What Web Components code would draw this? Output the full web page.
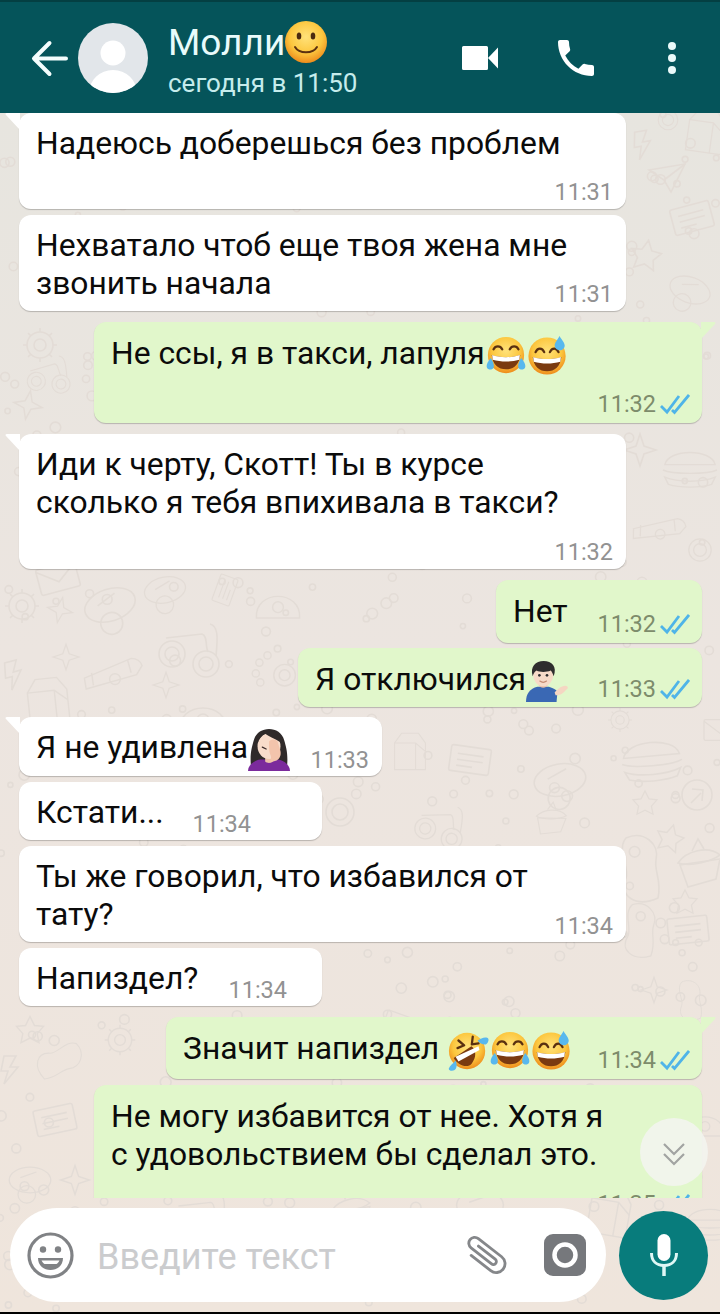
<!DOCTYPE html>
<html lang="ru">
<head>
<meta charset="utf-8">
<title>Молли</title>
<style>
  html, body { margin: 0; padding: 0; background: #000; }
  body { font-family: Roboto, "Liberation Sans", sans-serif; }
</style>
</head>
<body>
<wa-chat>
  <wa-header slot="header" name="Молли" status="сегодня в 11:50"></wa-header>

  <wa-bubble style="width:607px;height:96px;margin-bottom:6px" time="11:31">Надеюсь доберешься без проблем</wa-bubble>
  <wa-bubble style="width:607px;height:96px;margin-bottom:11px" time="11:31">Нехватало чтоб еще твоя жена мне<br>звонить начала</wa-bubble>
  <wa-bubble out tail style="width:608px;height:101px;margin-bottom:11px" time="11:32">Не ссы, я в такси, лапуля<wa-emoji kind="joy"></wa-emoji><wa-emoji kind="sweat"></wa-emoji></wa-bubble>
  <wa-bubble tail style="width:607px;height:135px;margin-bottom:11px" time="11:32">Иди к черту, Скотт! Ты в курсе<br>сколько я тебя впихивала в такси?</wa-bubble>
  <wa-bubble out style="width:206px;height:63px;margin-bottom:5px" time="11:32">Нет</wa-bubble>
  <wa-bubble out style="width:404px;height:59px;margin-bottom:10px;--meta-bottom:3px" time="11:33">Я отключился<wa-emoji kind="shrug"></wa-emoji></wa-bubble>
  <wa-bubble tail style="width:363px;height:59px;margin-bottom:6px;--meta-bottom:1px" time="11:33">Я не удивлена<wa-emoji kind="facepalm"></wa-emoji></wa-bubble>
  <wa-bubble style="width:303px;height:58px;margin-bottom:6px;--meta-right:71px;--meta-bottom:1px" time="11:34">Кстати...</wa-bubble>
  <wa-bubble style="width:607px;height:96px;margin-bottom:6px;--meta-bottom:1px" time="11:34">Ты же говорил, что избавился от<br>тату?</wa-bubble>
  <wa-bubble style="width:303px;height:58px;margin-bottom:11px;--meta-right:35px;--meta-bottom:1px" time="11:34">Напиздел?</wa-bubble>
  <wa-bubble out tail style="width:536px;height:62px;margin-bottom:6px" time="11:34">Значит напиздел&nbsp;<wa-emoji kind="rofl"></wa-emoji><wa-emoji kind="joy"></wa-emoji><wa-emoji kind="sweat"></wa-emoji></wa-bubble>
  <wa-bubble out style="width:608px;height:138px" time="11:35">Не могу избавится от нее. Хотя я<br>с удовольствием бы сделал это.</wa-bubble>

  <wa-scroll-down slot="over"></wa-scroll-down>
  <wa-composer slot="composer" placeholder="Введите текст"></wa-composer>
</wa-chat>

<script>
// Chat shell: header on top, wallpaper + message list, composer at the bottom
const chatTemplate = document.createElement('template');
chatTemplate.innerHTML = `
  <style>
    :host {
      display: flex;
      flex-direction: column;
      width: 720px;
      height: 1314px;
      overflow: hidden;
      background: #000;
      font-family: Roboto, "Liberation Sans", sans-serif;
    }
    .main {
      position: relative;
      flex: none;
      height: 1199px;
      display: flex;
      flex-direction: column;
      overflow: hidden;
    }
    .list {
      position: relative;
      flex: none;
      height: 1085px;
      display: flex;
      flex-direction: column;
      overflow: hidden;
    }
  </style>
  <slot name="header"></slot>
  <div class="main">
    <wa-wallpaper></wa-wallpaper>
    <div class="list"><slot></slot></div>
    <slot name="composer"></slot>
    <slot name="over"></slot>
  </div>
`;

class WaChat extends HTMLElement {
  constructor() {
    super();
    this.attachShadow({ mode: 'open' }).appendChild(chatTemplate.content.cloneNode(true));
  }
}

// Top bar
const headerTemplate = document.createElement('template');
headerTemplate.innerHTML = `
  <style>
    :host {
      display: flex;
      flex: none;
      align-items: center;
      height: 113px;
      box-sizing: border-box;
      border-top: 2px solid #043f42;
      background: #05545a;
      color: #fff;
      padding: 0 36px 0 30px;
    }
    .back { width: 40px; height: 40px; flex: none; margin-top: 2px; }
    .avatar { width: 70px; height: 70px; flex: none; margin: 1px 0 0 8px; }
    .info { flex: 1; margin: 3px 0 0 20px; }
    .name {
      display: flex;
      align-items: center;
      height: 44px;
      font-size: 37px;
      line-height: 44px;
      color: #e9fbfb;
    }
    .status { font-size: 26px; line-height: 30px; margin-top: 3px; color: #c6ecec; }
    .actions { display: flex; align-items: center; }
    .video { width: 36px; height: 24px; margin-right: 60px; }
    .call { width: 36px; height: 36px; margin-right: 66px; }
    .dots { width: 24px; height: 40px; }
    wa-emoji { --size: 44px; --drop: -1px; margin-left: -1px; }
  </style>
  <svg class="back" viewBox="0 0 40 40">
    <path d="M36 19.500H5M19.500 4 4 19.500 19.500 35" fill="none" stroke="#f4fdfd" stroke-width="4" stroke-linecap="round" stroke-linejoin="round"/>
  </svg>
  <svg class="avatar" viewBox="0 0 70 70">
    <clipPath id="round"><circle cx="35" cy="35" r="35"/></clipPath>
    <g clip-path="url(#round)">
      <rect width="70" height="70" fill="#e2e6ea"/>
      <circle cx="35" cy="30" r="12.500" fill="#fff"/>
      <ellipse cx="35" cy="70" rx="24" ry="23" fill="#fff"/>
    </g>
  </svg>
  <div class="info">
    <div class="name"><span id="name"></span><wa-emoji kind="smile"></wa-emoji></div>
    <div class="status" id="status"></div>
  </div>
  <div class="actions">
    <svg class="video" viewBox="0 0 36 24">
      <path d="M1.500 0h23A1.500 1.500 0 0 1 26 1.500v21a1.500 1.500 0 0 1-1.500 1.500h-23A1.500 1.500 0 0 1 0 22.500v-21A1.500 1.500 0 0 1 1.500 0z" fill="#fff"/>
      <path d="M26 12 36 1.500v21z" fill="#fff"/>
    </svg>
    <svg class="call" viewBox="3 3 18 18">
      <path fill="#fff" d="M6.62 10.79c1.44 2.83 3.76 5.14 6.59 6.59l2.2-2.2c.27-.27.67-.36 1.02-.24 1.12.37 2.33.57 3.57.57.55 0 1 .45 1 1V20c0 .55-.45 1-1 1-9.39 0-17-7.61-17-17 0-.55.45-1 1-1h3.5c.55 0 1 .45 1 1 0 1.25.2 2.45.57 3.57.11.35.03.74-.25 1.02l-2.2 2.2z"/>
    </svg>
    <svg class="dots" viewBox="0 0 24 40">
      <circle cx="12" cy="8" r="4" fill="#eafafa"/>
      <circle cx="12" cy="20" r="4" fill="#eafafa"/>
      <circle cx="12" cy="32" r="4" fill="#eafafa"/>
    </svg>
  </div>
`;

class WaHeader extends HTMLElement {
  constructor() {
    super();
    this._shadowRoot = this.attachShadow({ mode: 'open' });
    this._shadowRoot.appendChild(headerTemplate.content.cloneNode(true));
  }

  connectedCallback() {
    this._shadowRoot.getElementById('name').textContent = this.getAttribute('name');
    this._shadowRoot.getElementById('status').textContent = this.getAttribute('status');
  }
}

// One message. Size comes from the page (style on the element), text from the slot
const bubbleTemplate = document.createElement('template');
bubbleTemplate.innerHTML = `
  <style>
    :host {
      position: relative;
      display: flex;
      flex: none;
      box-sizing: border-box;
      margin-left: 19px;
      padding: 11px var(--meta-right, 13px) 0 17px;
      border-radius: 12px;
      background: #fff;
      box-shadow: 0 1px 1px rgba(0, 0, 0, .22);
      font-size: 31.800px;
      line-height: 38px;
      color: #0b0b0b;
    }
    :host([out]) {
      align-self: flex-end;
      margin: 0 18px 0 0;
      padding: 12px 12px 0 17px;
      background: #e1f7cb;
    }
    .text { flex: 1 1 0; min-width: 0; white-space: nowrap; }
    .meta {
      align-self: flex-end;
      display: flex;
      align-items: center;
      flex: none;
      height: 30px;
      margin-bottom: var(--meta-bottom, 2px);
      font-size: 23.500px;
      line-height: 30px;
      color: #929292;
    }
    :host([out]) .meta { color: #7d8c6b; margin-bottom: var(--meta-bottom, 4px); }
    .ticks { display: none; width: 30px; height: 24px; margin-left: 4px; }
    :host([out]) .ticks { display: block; }
    .tail { display: none; position: absolute; top: 0; width: 15px; height: 17px; left: -14px; }
    :host([tail]) .tail { display: block; }
    :host([out]) .tail { left: auto; right: -14px; transform: scaleX(-1); }
    .tail path { fill: #fff; }
    :host([out]) .tail path { fill: #e1f7cb; }
  </style>
  <svg class="tail" viewBox="0 0 15 17"><path d="M15 0H2C.4 0 0 1 1 2l14 15z"/></svg>
  <div class="text"><slot></slot></div>
  <div class="meta">
    <span id="time"></span>
    <svg class="ticks" viewBox="0 0 30 24">
      <path d="M1 14l6 6L19 4M12 18l2.500 2.500L29 3" fill="none" stroke="#4fb4e8" stroke-width="2.800"/>
    </svg>
  </div>
`;

class WaBubble extends HTMLElement {
  constructor() {
    super();
    this._shadowRoot = this.attachShadow({ mode: 'open' });
    this._shadowRoot.appendChild(bubbleTemplate.content.cloneNode(true));
  }

  connectedCallback() {
    this._shadowRoot.getElementById('time').textContent = this.getAttribute('time');
    if (!this.previousElementSibling || this.previousElementSibling.tagName === 'WA-HEADER') {
      this.setAttribute('tail', '');
    }
  }
}

// Emoji are drawn, there is no colour emoji font on the machine
const FACE = `
  <defs>
    <radialGradient id="f" cx=".5" cy=".38" r=".62">
      <stop offset="0" stop-color="#ffe27a"/>
      <stop offset=".62" stop-color="#fcc73f"/>
      <stop offset="1" stop-color="#ee8c1c"/>
    </radialGradient>
  </defs>
`;
const TEAR = '#58b8ee';
const EMOJI = {
  smile: `${FACE}
    <circle cx="22" cy="22" r="21" fill="url(#f)"/>
    <ellipse cx="15" cy="16" rx="2.300" ry="3.600" fill="#4a2a10"/>
    <ellipse cx="29" cy="16" rx="2.300" ry="3.600" fill="#4a2a10"/>
    <path d="M11 27c4 7 18 7 22 0" fill="none" stroke="#5a3010" stroke-width="2" stroke-linecap="round"/>`,
  joy: `${FACE}
    <circle cx="22" cy="21" r="19" fill="url(#f)"/>
    <path d="M9 15c2-4 7-4 9 0M26 15c2-4 7-4 9 0" fill="none" stroke="#5a3010" stroke-width="2.400" stroke-linecap="round"/>
    <path d="M7 21c8 3 22 3 30 0-1 10-7 15-15 15S8 31 7 21z" fill="#7a3a10"/>
    <path d="M7.500 21c8 3 21 3 29 0l-.5 5c-9 2.500-19 2.500-28 0z" fill="#fff"/>
    <path d="M6 24c-3 4-5 7-4 10s6 3 7 0-1-7-3-10zM38 24c3 4 5 7 4 10s-6 3-7 0 1-7 3-10z" fill="${TEAR}"/>`,
  sweat: `${FACE}
    <circle cx="21" cy="22" r="19.500" fill="url(#f)"/>
    <path d="M9 18c2-5 7-5 9 0M24 18c2-5 7-5 9 0" fill="none" stroke="#5a3010" stroke-width="2.400" stroke-linecap="round"/>
    <path d="M6 23c8 3 22 3 30 0-1 10-7 15-15 15S7 33 6 23z" fill="#7a3a10"/>
    <path d="M6.500 23c8 3 21 3 29 0l-.5 5c-9 2.500-19 2.500-28 0z" fill="#fff"/>
    <path d="M34 1c-2 4-5 7-5 10s3 5 5.500 5 5-2 5-5-3-6-5.500-10z" fill="${TEAR}"/>`,
  rofl: `${FACE}
    <circle cx="21" cy="22" r="19" fill="url(#f)"/>
    <path d="M12 11l6 5-7 3M27 7l-1 8 7-1" fill="none" stroke="#5a3010" stroke-width="2.400" stroke-linecap="round" stroke-linejoin="round"/>
    <path d="M8 23 30 21c3 6-1 13-8 16S8 31 8 23z" transform="rotate(-28 20 28)" fill="#7a3a10"/>
    <path d="M9 28 33 17l1 4-22 12z" fill="#fff"/>
    <path d="M32 11c3-2 7-4 10-3s1 6-1 7-7-1-9-4zM9 32c-2 3-6 5-7 8s4 3 6 2 3-6 1-10z" fill="${TEAR}"/>`,
  shrug: `
    <path d="M0 43c0-9 4-14 12-16h12c4 1 7 3 9 5l-1 11z" fill="#3a68b4"/>
    <path d="M30 33c3-3 7-7 11-7 3 0 4 3 1 4-2 3-6 6-11 6z" fill="#f5d6c2"/>
    <path d="M13 25c2 4 8 4 10 0l-1-5h-8z" fill="#e9bda4"/>
    <ellipse cx="18" cy="14.500" rx="10.500" ry="12" fill="#f7dac8"/>
    <path d="M7 16C4 6 10 0 18.500 0S33 6 29 16c-1-3-2-5-3-6-5 2-11 2-15 0-2 1-3 3-4 6z" fill="#2f2d2e"/>
    <circle cx="14" cy="15" r="1.400" fill="#2f2d2e"/>
    <circle cx="22" cy="15" r="1.400" fill="#2f2d2e"/>
    <path d="M14.500 21c2 1.500 5 1.500 7 0" fill="none" stroke="#c58a72" stroke-width="1.200" stroke-linecap="round"/>`,
  facepalm: `
    <path d="M3 38C2 26 4 19 6 12 8 4 15 0 22 0s14 4 16 12c2 7 4 14 3 26z" fill="#2f2a2a"/>
    <path d="M0 44c0-6 6-11 13-12h18c7 1 13 6 13 12z" fill="#7b2a9c"/>
    <path d="M18 27h8v7c-2 2-6 2-8 0z" fill="#edc2aa"/>
    <ellipse cx="22" cy="18" rx="12" ry="13.500" fill="#f8dccb"/>
    <path d="M10 15c2-5 4-8 8-10 4 3 10 5 16 9C33 7 28 2 22 2S11 8 10 15z" fill="#2f2a2a"/>
    <path d="M15 19l4 2" stroke="#3a2a2a" stroke-width="1.300" stroke-linecap="round"/>
    <path d="M22 13c3-3 7-2 9 0l3 10c1 5-1 8-4 10l-7 2c1-3 2-6 0-9-1-3-1-9-1-13z" fill="#f3c4ac"/>`
};

const emojiTemplate = document.createElement('template');
emojiTemplate.innerHTML = `
  <style>
    :host {
      display: inline-block;
      width: var(--size, 42px);
      height: var(--size, 42px);
      margin: -10px 0;
      vertical-align: middle;
      position: relative;
      top: var(--drop, 0);
    }
    svg { display: block; width: 100%; height: 100%; }
  </style>
  <svg viewBox="0 0 44 44"></svg>
`;

class WaEmoji extends HTMLElement {
  constructor() {
    super();
    this._shadowRoot = this.attachShadow({ mode: 'open' });
    this._shadowRoot.appendChild(emojiTemplate.content.cloneNode(true));
  }

  connectedCallback() {
    this._shadowRoot.querySelector('svg').innerHTML = EMOJI[this.getAttribute('kind')] || '';
  }
}

// Doodle wallpaper, only the parts not covered by bubbles are placed by hand
const DOODLES = {
  gear: '<circle r="6"/><circle r="13"/><path d="M0-13v-4M0 13v4M-13 0h-4M13 0h4M-9-9l-3-3M9 9l3 3M-9 9l-3 3M9-9l3-3"/>',
  star: '<path d="M0-16 4-4 16 0 4 4 0 16-4 4-16 0-4-4z"/>',
  star5: '<path d="M0-15 5-5 15-4 8 4 10 14 0 9-10 14-8 4-15-4-5-5z"/>',
  env: '<rect x="-20" y="-13" width="40" height="26" rx="2"/><path d="M-20-11 0 4 20-11"/>',
  lines: '<rect x="-20" y="-13" width="40" height="26" rx="2"/><path d="M-13-5h26M-13 1h26M-13 7h16"/>',
  burger: '<path d="M-28-6C-24-24 24-24 28-6z"/><path d="M-30 0c10 5 50 5 60 0"/><path d="M-28 8c14 6 42 6 56 0l-4 8c-12 4-36 4-48 0z"/>',
  arrow: '<circle r="15"/><path d="M-6 8 4-2M-5-6 6-5 5 6"/>',
  cake: '<path d="M-18 0-10 22 18 14 22-6z"/><path d="M-20-2C-12-14 10-20 22-10c-8 6-28 12-42 8z"/><path d="M-6-14 0-26 6-16"/>',
  bolt: '<path d="M-6-14 6-14 0-3 8-3-6 14-2 1-9 1z"/>',
  plane: '<path d="M-18-8 18-14 4 14-3 2z"/><path d="M-3 2 18-14"/>',
  wheel: '<circle r="14"/><circle r="8"/>',
  bike: '<circle cx="-18" cy="6" r="13"/><circle cx="-18" cy="6" r="7"/><circle cx="16" cy="16" r="13"/><circle cx="16" cy="16" r="7"/><path d="M-24-10 12-14c6 2 3 12 6 18M20-24c8 2 8 12 6 32"/>',
  tube: '<path d="M-34-2-32 10 24-6 30-16c-2-6-6-8-12-8z"/><path d="M-26-8-24 6M14-22 18-8"/><circle cy="-1" r="6"/>',
  milk: '<path d="M-22-10V28H22V-10L12-24H-12z"/><path d="M-22-10H8L22 2M8-10V28"/>',
  dome: '<path d="M-24 20C-26-12 26-12 24 20z"/><circle cy="8" r="6"/>',
  helmet: '<ellipse rx="26" ry="16"/><path d="M-12-3 8-10"/><circle cx="-4" cy="18" r="11"/>',
  paw: '<circle cx="14" cy="8" r="12"/><circle cx="14" cy="8" r="6"/><circle cx="-14" cy="-6" r="4"/><circle cx="-5" cy="-14" r="4"/><circle cx="-18" cy="6" r="4"/><circle cx="-13" cy="16" r="4"/>',
  blob: '<path d="M-14-30C4-38 20-24 16-8 14 4 22 12 18 30-4 40-22 28-14 10-10 0-24-18-14-30z"/>'
};

const PLACED = [
  // top right column
  ['bolt', 643, 145, 1, -10], ['plane', 667, 178, 1, 0], ['lines', 692, 218, 1, -15], ['wheel', 668, 120, .7, 0],
  ['star5', 646, 255, 1, 10], ['helmet', 690, 290, .8, 20], ['milk', 706, 130, .8, 8],
  // left column, middle
  ['gear', 40, 345, 1, 0], ['star', 28, 405, .9, 10], ['bike', 48, 375, .7, -10],
  ['burger', 690, 470, .9, 0], ['tube', 660, 535, .8, 10], ['star', 640, 450, 1, 0], ['wheel', 700, 550, .8, 0],
  // gap under the long bubble
  ['env', 58, 578, 1, -15], ['helmet', 110, 605, 1, -18], ['helmet', 165, 590, .8, -12], ['lines', 225, 590, .7, -70],
  ['dome', 278, 600, .9, 0], ['gear', 22, 606, 1, 0], ['star', 60, 610, .8, 12], ['star', 66, 657, .8, 0],
  ['bike', 190, 648, 1, 0], ['bolt', 14, 675, 1, -15], ['paw', 272, 668, .9, 0],
  ['tube', 115, 680, .9, 0], ['star', 166, 685, .8, 0], ['milk', 48, 700, .9, -6], ['dome', 203, 712, 1, 0],
  // right of the short bubbles
  ['wheel', 340, 812, 1, 0], ['burger', 652, 762, 1, -5], ['arrow', 697, 795, 1, 0], ['star5', 645, 803, .8, 0],
  ['star5', 670, 838, .9, 15], ['cake', 698, 865, 1, 0], ['blob', 640, 868, 1, 0], ['star5', 685, 902, .8, 0],
  ['lines', 688, 930, 1, -6], ['blob', 640, 930, .8, 8], ['star', 654, 990, .8, 0], ['blob', 690, 1000, .6, 0],
  ['lines', 470, 760, 1, 8], ['helmet', 560, 780, 1, -10], ['bike', 440, 825, .8, 5], ['cake', 550, 820, .7, 10],
  ['milk', 410, 750, .7, 0], ['gear', 620, 720, .7, 0], ['env', 720, 730, .8, 0],
  // bottom left
  ['star5', 30, 1030, .9, 0], ['lines', 55, 1120, 1, -12], ['bolt', 10, 1070, 1, 0], ['blob', 60, 1060, .7, 70],
  ['gear', 120, 1040, .9, 0], ['star', 75, 1180, .9, 0], ['helmet', 30, 1180, .8, 0], ['wheel', 140, 1110, .7, 0],
  ['lines', 400, 1025, .8, 20], ['cake', 350, 1212, .9, 0], ['bike', 200, 1215, .9, 0], ['env', 680, 1045, .8, 20],
  ['burger', 710, 1225, .8, 0], ['milk', 610, 1210, .9, 10], ['dome', 705, 1120, .8, 0], ['helmet', 480, 1205, .9, 0]
];

const wallpaperTemplate = document.createElement('template');
wallpaperTemplate.innerHTML = `
  <style>
    :host { position: absolute; inset: 0; display: block; }
    svg { display: block; width: 100%; height: 100%; }
    g.d { fill: none; stroke: #e3dcd6; stroke-width: 1.600; }
  </style>
  <svg viewBox="0 113 720 1199" preserveAspectRatio="xMinYMin slice">
    <defs>
      <linearGradient id="bg" x1="0" y1="0" x2="0" y2="1">
        <stop offset="0" stop-color="#e7e5df"/>
        <stop offset=".45" stop-color="#ece5e0"/>
        <stop offset="1" stop-color="#efe5dc"/>
      </linearGradient>
    </defs>
    <rect y="113" width="720" height="1201" fill="url(#bg)"/>
    <g class="d" id="doodles"></g>
  </svg>
`;

class WaWallpaper extends HTMLElement {
  constructor() {
    super();
    this._shadowRoot = this.attachShadow({ mode: 'open' });
    this._shadowRoot.appendChild(wallpaperTemplate.content.cloneNode(true));
  }

  connectedCallback() {
    let out = '';
    PLACED.forEach(([name, x, y, s, r]) => {
      out += `<g transform="translate(${x} ${y}) rotate(${r}) scale(${s})">${DOODLES[name]}</g>`;
    });
    // small bubbles between the doodles, fixed seed so that it is the same every run
    let seed = 7;
    const rnd = () => (seed = (seed * 16807) % 2147483647) / 2147483647;
    for (let i = 0; i < 420; i++) {
      out += `<circle cx="${(rnd() * 720).toFixed(1)}" cy="${(113 + rnd() * 1200).toFixed(1)}" r="${(2.5 + rnd() * 3).toFixed(1)}"/>`;
    }
    this._shadowRoot.getElementById('doodles').innerHTML = out;
  }
}

// Round "scroll to bottom" button over the last message
const scrollTemplate = document.createElement('template');
scrollTemplate.innerHTML = `
  <style>
    :host {
      position: absolute;
      left: 640px;
      top: 1005px;
      width: 68px;
      height: 68px;
      display: flex;
      align-items: center;
      justify-content: center;
      border-radius: 50%;
      background: rgba(243, 244, 240, .86);
    }
    svg { width: 26px; height: 26px; margin-top: 3px; }
  </style>
  <svg viewBox="0 0 26 26">
    <path d="M3 3l10 10L23 3M3 13l10 10 10-10" fill="none" stroke="#a2a4a2" stroke-width="2.200"/>
  </svg>
`;

class WaScrollDown extends HTMLElement {
  constructor() {
    super();
    this.attachShadow({ mode: 'open' }).appendChild(scrollTemplate.content.cloneNode(true));
  }
}

// Input pill + mic button
const composerTemplate = document.createElement('template');
composerTemplate.innerHTML = `
  <style>
    :host {
      position: relative;
      display: flex;
      flex: none;
      align-items: center;
      gap: 13px;
      height: 114px;
      box-sizing: border-box;
      padding: 10px 12px 10px 10px;
    }
    .pill {
      display: flex;
      align-items: center;
      flex: none;
      width: 596px;
      height: 94px;
      box-sizing: border-box;
      padding: 0 20px 0 17px;
      border-radius: 47px;
      background: #fff;
    }
    .smile { width: 47px; height: 47px; flex: none; }
    .placeholder {
      flex: 1;
      margin: 4px 0 0 23px;
      font-size: 36px;
      line-height: 40px;
      color: #cbccce;
    }
    .clip { width: 52px; height: 52px; flex: none; margin-right: 33px; }
    .cam { width: 42px; height: 42px; flex: none; }
    .mic {
      width: 89px;
      height: 89px;
      flex: none;
      border-radius: 50%;
      background: #087c7c;
      display: flex;
      align-items: center;
      justify-content: center;
    }
    .mic svg { width: 28px; height: 42px; }
  </style>
  <div class="pill">
    <svg class="smile" viewBox="0 0 47 47">
      <circle cx="23.500" cy="23.500" r="21.500" fill="none" stroke="#808285" stroke-width="3.200"/>
      <circle cx="16" cy="17.500" r="3.200" fill="#808285"/>
      <circle cx="31" cy="17.500" r="3.200" fill="#808285"/>
      <path d="M11 26h25c0 8-6 12-12.500 12S11 34 11 26z" fill="#808285"/>
      <path d="M14.500 28.500h18c-1 2-2 3-3 3.500h-12c-1-.5-2-1.500-3-3.500z" fill="#fff"/>
    </svg>
    <div class="placeholder" id="ph"></div>
    <svg class="clip" viewBox="0 0 44 44">
      <g transform="rotate(-52 22 22) translate(1.500 1)">
        <path d="M13 12V33a7.500 7.500 0 0 0 15 0V8a5 5 0 0 0-10 0V30a2.500 2.500 0 0 0 5 0V12" fill="none" stroke="#85878a" stroke-width="2.400" stroke-linecap="round"/>
      </g>
    </svg>
    <svg class="cam" viewBox="0 0 42 42">
      <rect width="42" height="42" rx="9" fill="#76787c"/>
      <circle cx="21" cy="21" r="10.500" fill="none" stroke="#fff" stroke-width="4.500"/>
    </svg>
  </div>
  <div class="mic">
    <svg viewBox="0 0 28 42">
      <rect x="7.500" y="0" width="13" height="27" rx="6.500" fill="#fff"/>
      <path d="M1.500 19c0 8 5 12.500 12.500 12.500S26.500 27 26.500 19" fill="none" stroke="#dff7f5" stroke-width="3"/>
      <path d="M14 31v11" stroke="#dff7f5" stroke-width="3.500"/>
    </svg>
  </div>
`;

class WaComposer extends HTMLElement {
  constructor() {
    super();
    this._shadowRoot = this.attachShadow({ mode: 'open' });
    this._shadowRoot.appendChild(composerTemplate.content.cloneNode(true));
  }

  connectedCallback() {
    this._shadowRoot.getElementById('ph').textContent = this.getAttribute('placeholder');
  }
}

customElements.define('wa-wallpaper', WaWallpaper);
customElements.define('wa-emoji', WaEmoji);
customElements.define('wa-header', WaHeader);
customElements.define('wa-bubble', WaBubble);
customElements.define('wa-scroll-down', WaScrollDown);
customElements.define('wa-composer', WaComposer);
customElements.define('wa-chat', WaChat);
</script>
</body>
</html>
